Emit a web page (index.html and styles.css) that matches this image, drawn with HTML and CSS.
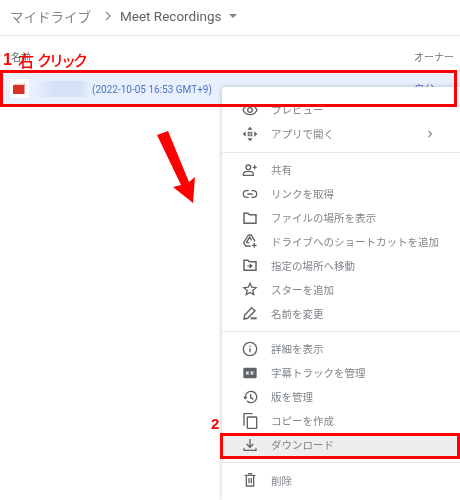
FILE: index.html
```html
<!DOCTYPE html>
<html lang="ja">
<head>
  <meta charset="UTF-8">
  <meta name="viewport" content="width=device-width, initial-scale=1.0">
  <title>Meet Recordings</title>
  <link rel="stylesheet" href="styles.css">
</head>
<body>
  <div class="page">
    <div class="breadcrumb">
      <span class="crumb-root">マイドライブ</span>
      <svg class="crumb-sep" width="8" height="10" viewBox="0 0 8 10"><path d="M2 1l4 4-4 4" fill="none" stroke="#80868b" stroke-width="1.1"/></svg>
      <span class="crumb-current">Meet Recordings</span>
      <span class="crumb-caret"></span>
    </div>

    <div class="list-head">
      <span class="head-name">名前</span>
      <span class="head-owner">オーナー</span>
    </div>

    <div class="file-row">
      <span class="file-icon">
        <svg width="13" height="11" viewBox="0 0 13 11"><path d="M0 2h2.2l1-2v2h2l1-2v2h2l1-2v2h1.300l1-2v11H0z" fill="#d93025"/></svg>
      </span>
      <span class="file-blur"></span>
      <span class="file-date">(2022-10-05 16:53 GMT+9)</span>
      <span class="file-owner">自分</span>
    </div>

    <!-- 右クリックメニュー -->
    <div class="menu">
      <div class="menu-item">
        <svg class="icon" viewBox="0 0 24 24"><path d="M1.500 12C3.500 7.500 7.500 5 12 5s8.500 2.500 10.500 7c-2 4.500-6 7-10.500 7S3.500 16.500 1.500 12z" fill="none" stroke="#5f6368" stroke-width="2"/><circle cx="12" cy="12" r="3.500" fill="none" stroke="#5f6368" stroke-width="2"/></svg>
        <span>プレビュー</span>
      </div>
      <div class="menu-item">
        <svg class="icon" viewBox="0 0 24 24"><path d="M12 1l4 4.500H8zM12 23l-4-4.500h8zM1 12l4.500-4v8zM23 12l-4.500 4V8z" fill="#5f6368"/><path d="M8.500 8.500h3v3h-3zM12.500 8.500h3v3h-3zM8.500 12.500h3v3h-3zM12.500 12.500h3v3h-3z" fill="#5f6368"/></svg>
        <span>アプリで開く</span>
        <svg class="chevron" width="6" height="8" viewBox="0 0 6 8"><path d="M1.500 1l3 3-3 3" fill="none" stroke="#80868b" stroke-width="1.100"/></svg>
      </div>
      <div class="menu-divider"></div>
      <div class="menu-item">
        <svg class="icon" viewBox="0 0 24 24"><circle cx="9.500" cy="8" r="3.500" fill="none" stroke="#5f6368" stroke-width="2"/><path d="M2 20v-2c0-2.500 4-4 7.500-4s7.500 1.500 7.500 4v2z" fill="none" stroke="#5f6368" stroke-width="2"/><path d="M19 5v6M16 8h6" stroke="#5f6368" stroke-width="2"/></svg>
        <span>共有</span>
      </div>
      <div class="menu-item">
        <svg class="icon" viewBox="0 0 24 24"><path d="M10 7H7a5 5 0 0 0 0 10h3M14 7h3a5 5 0 0 1 0 10h-3M8 12h8" fill="none" stroke="#5f6368" stroke-width="2"/></svg>
        <span>リンクを取得</span>
      </div>
      <div class="menu-item">
        <svg class="icon" viewBox="0 0 24 24"><path d="M3 5h6l2 2h10v13H3z" fill="none" stroke="#5f6368" stroke-width="2.200"/></svg>
        <span>ファイルの場所を表示</span>
      </div>
      <div class="menu-item">
        <svg class="icon" viewBox="0 0 24 24"><path d="M9.500 3h4.500l5.500 9.500M9.500 3L2.500 14.500l3 5h7.500M6.500 14.500l5-8.500 3 5M6.500 14.500h4.500" fill="none" stroke="#5f6368" stroke-width="2"/><path d="M18.500 15v7M15 18.500h7" stroke="#5f6368" stroke-width="2"/></svg>
        <span>ドライブへのショートカットを追加</span>
      </div>
      <div class="menu-item">
        <svg class="icon" viewBox="0 0 24 24"><path d="M3 5h6l2 2h10v13H3z" fill="none" stroke="#5f6368" stroke-width="2.200"/><path d="M8 13.500h6M12 10.500l3.500 3-3.500 3z" fill="#5f6368" stroke="#5f6368" stroke-width="1.500"/></svg>
        <span>指定の場所へ移動</span>
      </div>
      <div class="menu-item">
        <svg class="icon" viewBox="0 0 24 24"><path d="M12 3.500l2.600 5.800 6.400.7-4.800 4.200 1.400 6.300-5.600-3.300-5.600 3.300 1.400-6.300L3 10l6.400-.7z" fill="none" stroke="#5f6368" stroke-width="2"/></svg>
        <span>スターを追加</span>
      </div>
      <div class="menu-item">
        <svg class="icon" viewBox="0 0 24 24"><path d="M3 21l1-6L14.500 4l5 4.500L8.500 20z" fill="none" stroke="#5f6368" stroke-width="2.200"/><path d="M13 18.500h9v3h-9z" fill="#5f6368"/></svg>
        <span>名前を変更</span>
      </div>
      <div class="menu-divider"></div>
      <div class="menu-item">
        <svg class="icon" viewBox="0 0 24 24"><circle cx="12" cy="12" r="10" fill="none" stroke="#5f6368" stroke-width="2"/><path d="M11 11h2v6h-2zM11 7h2v2h-2z" fill="#5f6368"/></svg>
        <span>詳細を表示</span>
      </div>
      <div class="menu-item">
        <svg class="icon" viewBox="0 0 24 24"><rect x="2" y="4" width="20" height="16" rx="2" fill="#5f6368"/><path d="M10.500 10.500H7v3h3.500M17.500 10.500H14v3h3.500" fill="none" stroke="#fff" stroke-width="1.800"/></svg>
        <span>字幕トラックを管理</span>
      </div>
      <div class="menu-item">
        <svg class="icon" viewBox="0 0 24 24"><path d="M5 12a8.500 8.500 0 1 1 2.500 6" fill="none" stroke="#5f6368" stroke-width="2"/><path d="M1.500 11.500h7L5 16z" fill="#5f6368"/><path d="M13 7.500V13l4 2.500" fill="none" stroke="#5f6368" stroke-width="2"/></svg>
        <span>版を管理</span>
      </div>
      <div class="menu-item">
        <svg class="icon" viewBox="0 0 24 24"><path d="M3 19V1h13" fill="none" stroke="#5f6368" stroke-width="2"/><rect x="8" y="6" width="14" height="17" rx="1" fill="none" stroke="#5f6368" stroke-width="2"/></svg>
        <span>コピーを作成</span>
      </div>
      <div class="menu-item is-hover">
        <svg class="icon" viewBox="0 0 24 24"><path d="M12 3v12M7 10.500l5 5 5-5" fill="none" stroke="#5f6368" stroke-width="2"/><path d="M3 17v3h18v-3" fill="none" stroke="#5f6368" stroke-width="2"/></svg>
        <span>ダウンロード</span>
      </div>
      <div class="menu-divider"></div>
      <div class="menu-item">
        <svg class="icon" viewBox="0 0 24 24"><path d="M4 5h16M6.500 5v16h11V5M9 2.500h6M10.500 9v8M14 9v8" fill="none" stroke="#5f6368" stroke-width="2"/></svg>
        <span>削除</span>
      </div>
    </div>

    <!-- 注釈 -->
    <div class="note-one"><b>1</b><span class="note-right">右</span><span class="note-click">クリック</span></div>
    <div class="box-row"></div>
    <svg class="arrow" width="44" height="76" viewBox="0 0 44 76"><path d="M1 5L12 1l21 51 6-5-2 26-20-16 8-2z" fill="#ff0000"/></svg>
    <div class="note-two">2</div>
    <div class="box-download"></div>
  </div>
</body>
</html>
```

FILE: styles.css
```css
html, body {
  margin: 0;
  padding: 0;
  background: #fff;
}
body {
  font-family: "Noto Sans CJK JP", "Roboto", sans-serif;
  color: #5f6368;
}
.page {
  position: relative;
  width: 460px;
  height: 500px;
  overflow: hidden;
  filter: blur(0.45px);
}

/* パンくず */
.breadcrumb {
  display: flex;
  align-items: center;
  height: 31px;
  padding: 0 0 4px 10px;
  border-bottom: 1px solid #e8e9ea;
}
.crumb-root {
  font-size: 13.5px;
  color: #80868b;
}
.crumb-sep {
  margin-left: 13px;
}
.crumb-current {
  margin-left: 8px;
  font-family: Roboto, sans-serif;
  font-size: 13.500px;
  color: #5f6368;
}
.crumb-caret {
  margin-left: 8px;
  border-left: 4px solid transparent;
  border-right: 4px solid transparent;
  border-top: 4px solid #80868b;
}

/* 一覧ヘッダー */
.list-head {
  display: flex;
  justify-content: space-between;
  align-items: center;
  height: 30px;
  padding: 5px 6px 0 11px;
  font-size: 10px;
}
.head-owner {
  color: #70757a;
}

/* 選択中の行 */
.file-row {
  display: flex;
  align-items: center;
  height: 35px;
  padding-left: 10px;
  background: #e8f0fe;
}
.file-icon {
  display: flex;
  align-items: center;
  justify-content: center;
  width: 19px;
  height: 19px;
  background: #fff;
}
.file-blur {
  width: 55px;
  height: 16px;
  margin-left: 7px;
  background: linear-gradient(90deg, #e8f0fe, #d5e2f6 30%, #d5e2f6 80%, #e8f0fe);
}
.file-date {
  margin-left: 1px;
  padding-top: 1px;
  font-family: Roboto, sans-serif;
  font-size: 10px;
  color: #4b72c4;
}
.file-owner {
  margin-left: auto;
  padding-right: 25px;
  font-size: 10.500px;
  color: #4b72c4;
}

/* コンテキストメニュー */
.menu {
  position: absolute;
  left: 222px;
  top: 87px;
  width: 238px;
  height: 413px;
  padding-top: 11px;
  box-sizing: border-box;
  background: #fff;
  border-radius: 4px 0 0 0;
  box-shadow: 0 0 5px rgba(60, 64, 67, 0.3);
}
.menu-item {
  display: flex;
  align-items: center;
  height: 23.900px;
  font-size: 10.500px;
  color: #80868b;
}
.menu-item.is-hover {
  background: #eeeeef;
}
.icon {
  width: 16px;
  height: 16px;
  margin-left: 20px;
  margin-right: 13px;
  flex: none;
}
.chevron {
  margin-left: auto;
  margin-right: 27px;
}
.menu-divider {
  height: 1px;
  margin: 6px 0 5px;
  background: #e8e9ea;
}

/* 赤い注釈 */
.note-one {
  position: absolute;
  left: 3px;
  top: 49px;
  display: flex;
  font-size: 16px;
  line-height: 22px;
  font-weight: 500;
  color: #f00;
  white-space: nowrap;
}
.note-one b {
  font-family: "Liberation Sans", sans-serif;
  font-weight: 700;
  width: 15px;
}
.note-click {
  margin-left: 3px;
  font-size: 15px;
  letter-spacing: -3px;
}
.box-row {
  position: absolute;
  left: 0;
  top: 70px;
  width: 451px;
  height: 31px;
  border: 3px solid #f00;
}
.arrow {
  position: absolute;
  left: 156px;
  top: 130px;
}
.note-two {
  position: absolute;
  left: 211px;
  top: 415px;
  font-family: "Liberation Sans", sans-serif;
  font-size: 15px;
  line-height: 18px;
  font-weight: 700;
  color: #f00;
}
.box-download {
  position: absolute;
  left: 220px;
  top: 433px;
  width: 234px;
  height: 20px;
  border: 3px solid #f00;
}
```
